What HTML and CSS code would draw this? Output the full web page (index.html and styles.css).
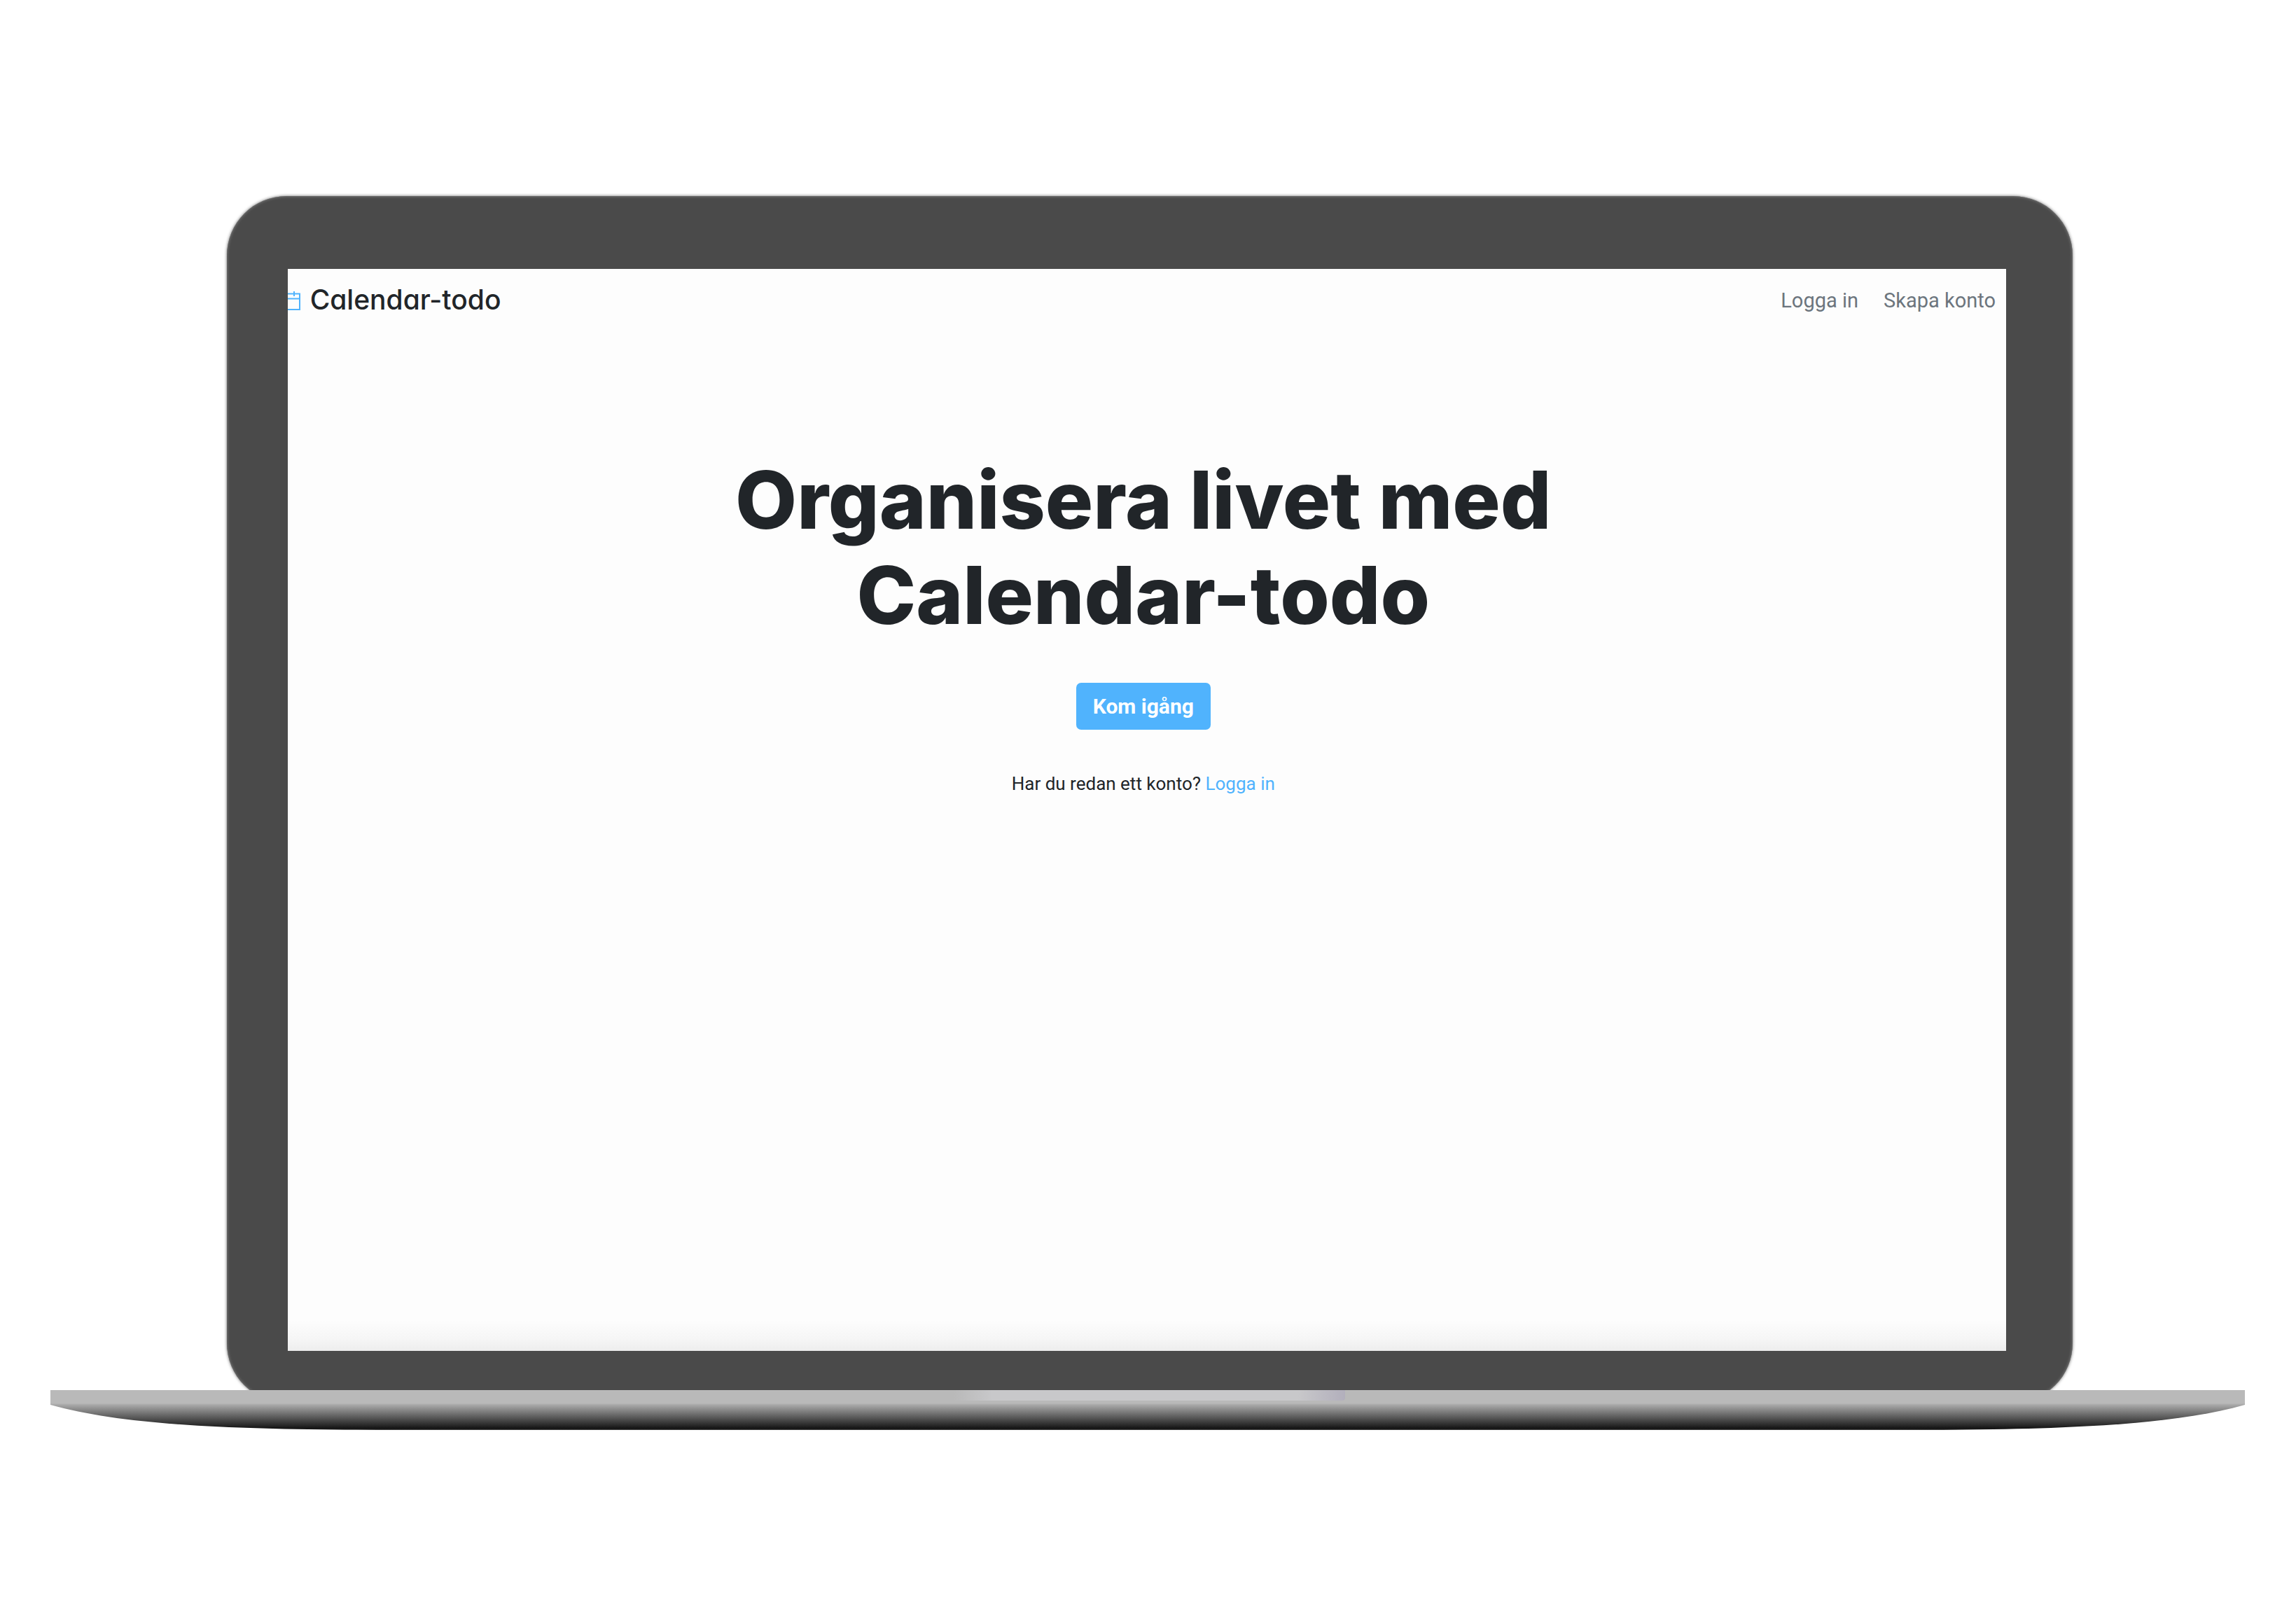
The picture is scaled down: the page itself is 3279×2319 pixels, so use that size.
FILE: index.html
```html
<!DOCTYPE html>
<html lang="sv">
<head>
  <meta charset="utf-8">
  <meta name="viewport" content="width=device-width, initial-scale=1">
  <title>Calendar-todo</title>
  <link rel="stylesheet" href="styles.css">
</head>
<body>
  <div class="laptop">
    <div class="lid">
      <div class="screen">
        <div class="page">
          <header class="navbar">
            <a class="brand" href="#">
              <svg class="brand-icon" viewBox="0 0 28 28" aria-hidden="true">
                <path d="M1 4.500H27V27H1ZM1 11.500H27M8 1V8M19 1V8"/>
              </svg>
              <span class="brand-name">Calendar-todo</span>
            </a>
            <nav class="nav-links">
              <a href="#">Logga in</a>
              <a href="#">Skapa konto</a>
            </nav>
          </header>
          <main class="hero">
            <h1 class="hero-title">Organisera livet med<br>Calendar-todo</h1>
            <button class="cta" type="button">Kom igång</button>
            <p class="hero-note">Har du redan ett konto? <a href="#">Logga in</a></p>
          </main>
        </div>
      </div>
    </div>
    <svg class="base" viewBox="0 0 3134 57" preserveAspectRatio="none" aria-hidden="true">
      <defs>
        <linearGradient id="body" x1="0" y1="0" x2="0" y2="1">
          <stop offset="0" stop-color="#b9b9b9"/>
          <stop offset="0.33" stop-color="#b9b9b9"/>
          <stop offset="0.37" stop-color="#a8a8a8"/>
          <stop offset="0.97" stop-color="#121212"/>
          <stop offset="1" stop-color="#555555"/>
        </linearGradient>
        <linearGradient id="notch" x1="0" y1="0" x2="1" y2="0">
          <stop offset="0" stop-color="#b9b9b9"/>
          <stop offset="0.1" stop-color="#c8c8ca"/>
          <stop offset="0.88" stop-color="#c8c8ca"/>
          <stop offset="1" stop-color="#b2afbc"/>
        </linearGradient>
      </defs>
      <path fill="url(#body)" d="M0 0H3134V21C3024 52 2854 57 2634 57H500C280 57 110 52 0 21Z"/>
      <path fill="url(#notch)" d="M1290 0H1849V11Q1849 15 1844 15H1295Q1290 15 1290 11Z"/>
    </svg>
  </div>
</body>
</html>
```
FILE: styles.css
```css
* {
  box-sizing: border-box;
}

body {
  margin: 0;
  background: #fff;
  color: #212529;
  font-family: Roboto, "Liberation Sans", sans-serif;
}

a {
  color: inherit;
  text-decoration: none;
}

.laptop {
  padding: 280px 0;
}

.lid {
  width: 80.4%;
  margin-left: 9.87%;
  padding: 104px 95px 74px 87px;
  border-radius: 85px;
  background: #4a4a4a;
  box-shadow: 0 0 4px #6a6a6a, inset 0 0 4px #8a8a8a;
}

.screen {
  aspect-ratio: 2454 / 1545;
  overflow: hidden;
  background: linear-gradient(to top, #ededed, #f6f6f6 18px, #fdfdfd 44px);
}

.page {
  margin-left: -10px;
}

.navbar {
  display: flex;
  align-items: center;
  justify-content: space-between;
  height: 90px;
  padding-right: 15px;
}

.brand {
  display: flex;
  align-items: center;
  gap: 14px;
}

.brand-name {
  padding-bottom: 4px;
  font-family: Inter, "Liberation Sans", sans-serif;
  font-size: 39px;
  font-weight: 500;
  font-feature-settings: "cv11";
}

.brand-icon {
  width: 28px;
  height: 28px;
  fill: none;
  stroke: #50b3fd;
  stroke-width: 2;
}

.nav-links {
  display: flex;
  gap: 36px;
  color: #6c757d;
  font-size: 29px;
}

.hero {
  display: flex;
  flex-direction: column;
  align-items: center;
  padding-top: 172px;
  text-align: center;
}

.hero-title {
  margin: 0 0 57px;
  font-family: Inter, "Liberation Sans", sans-serif;
  font-size: 114px;
  font-weight: 800;
  line-height: 136px;
}

.cta {
  height: 67px;
  padding: 0 24px;
  border: 0;
  border-radius: 7px;
  background: #50b3fd;
  color: #fff;
  font-family: inherit;
  font-size: 30px;
  font-weight: 700;
}

.hero-note {
  margin: 58px 0 0;
  font-size: 26px;
  line-height: 38px;
}

.hero-note a {
  color: #50b3fd;
}

.base {
  position: relative;
  display: block;
  width: 95.58%;
  height: 57px;
  margin: -18px 0 0 2.2%;
}
```
